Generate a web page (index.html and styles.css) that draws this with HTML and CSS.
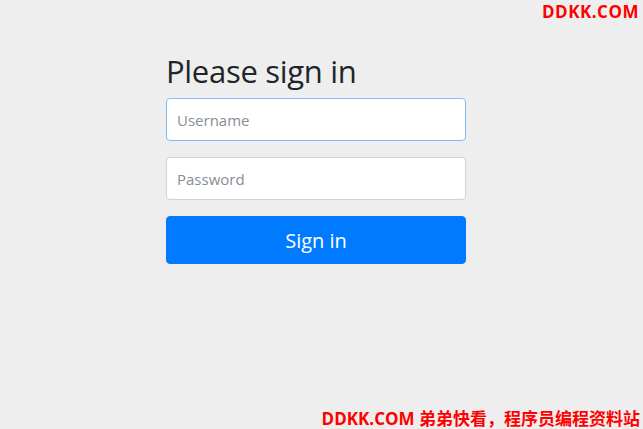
FILE: index.html
```html
<!DOCTYPE html>
<html>
<head>
  <meta charset="UTF-8">
  <title>Please sign in</title>
  <link rel="stylesheet" href="styles.css">
</head>

<body>
  <div class="container">
    <form class="form-signin" method="post" action="/login">
      <h2 class="form-signin-heading">Please sign in</h2>

      <p>
        <label for="username" class="sr-only">Username</label>
        <input type="text" id="username" name="username" class="form-control is-focused" placeholder="Username">
      </p>

      <p>
        <label for="password" class="sr-only">Password</label>
        <input type="password" id="password" name="password" class="form-control" placeholder="Password">
      </p>

      <button class="btn-signin" type="submit">Sign in</button>
    </form>
  </div>

  <!-- site watermarks -->
  <div class="mark mark-top">DDKK.COM</div>
  <div class="mark mark-bottom">DDKK.COM 弟弟快看，程序员编程资料站</div>
</body>

</html>
```

FILE: styles.css
```css
body {
  margin: 0;
  background-color: #eeeeee;
  color: #212529;
  font-family: 'Open Sans', 'Noto Sans', sans-serif;
  font-size: 16px;
}

.container {
  padding-top: 40px;
  padding-right: 11px;
}

.form-signin {
  width: 300px;
  margin: 0 auto;
}

.form-signin-heading {
  font-size: 31px;
  font-weight: 400;
  line-height: 38px;
  letter-spacing: -0.3px;
  margin: 12px 0 8px 0;
}

.form-signin p {
  margin: 0 0 16px 0;
}

.sr-only {
  position: absolute;
  width: 1px;
  height: 1px;
  overflow: hidden;
  clip: rect(0, 0, 0, 0);
}

.form-control {
  display: block;
  box-sizing: border-box;
  width: 100%;
  height: 43px;
  padding: 0 10px;
  font-family: inherit;
  font-size: 15px;
  color: #495057;
  background: #fff;
  border: 1px solid #ced4da;
  border-radius: 4px;
  outline: none;
}

.form-control::placeholder {
  color: #868e96;
}

.form-control.is-focused {
  border-color: #80bdff;
}

.btn-signin {
  display: block;
  box-sizing: border-box;
  width: 100%;
  height: 48px;
  font-family: inherit;
  font-size: 20px;
  color: #fff;
  background-color: #007bff;
  border: 1px solid #007bff;
  border-radius: 4px;
  cursor: pointer;
}

.mark {
  position: absolute;
  color: #ff0000;
  font-family: 'Open Sans', 'Noto Sans CJK SC', sans-serif;
  font-weight: 700;
  font-size: 17px;
  line-height: 20px;
}

.mark-top {
  top: 2px;
  right: 4px;
  letter-spacing: 0.5px;
}

.mark-bottom {
  bottom: 0;
  right: 3px;
}
```
